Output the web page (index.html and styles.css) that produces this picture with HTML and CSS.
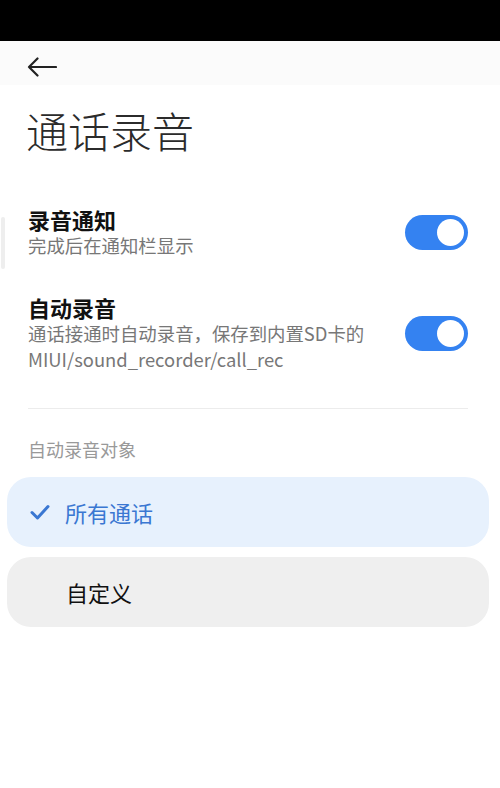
FILE: index.html
```html
<!DOCTYPE html>
<html lang="zh-CN">
<head>
<meta charset="utf-8">
<title>通话录音</title>
<link rel="stylesheet" href="styles.css">
</head>
<body>
<div class="statusbar"></div>
<header class="appbar">
  <svg class="back" width="30" height="20" viewBox="0 0 30 20" aria-label="返回">
    <path d="M29 10H2M10.5 1.5L2 10l8.5 8.5" fill="none" stroke="#222" stroke-width="2.2" stroke-linecap="round" stroke-linejoin="round"/>
  </svg>
</header>
<main class="page">
  <div class="edge"></div>
  <h1 class="title">通话录音</h1>
  <div class="row row-first">
    <div class="text">
      <div class="label">录音通知</div>
      <div class="desc">完成后在通知栏显示</div>
    </div>
    <div class="toggle"><span class="knob"></span></div>
  </div>
  <div class="row row-second">
    <div class="text">
      <div class="label">自动录音</div>
      <div class="desc">通话接通时自动录音，保存到内置SD卡的<br>MIUI/sound_recorder/call_rec</div>
    </div>
    <div class="toggle"><span class="knob"></span></div>
  </div>
  <hr class="divider">
  <div class="section">自动录音对象</div>
  <div class="option selected">
    <svg class="check" width="20" height="16" viewBox="0 0 20 16"><path d="M2 8.5l5.5 5.5L18 2.5" fill="none" stroke="#3a77d2" stroke-width="3" stroke-linecap="round" stroke-linejoin="round"/></svg>
    <span>所有通话</span>
  </div>
  <div class="option">
    <span class="spacer"></span>
    <span>自定义</span>
  </div>
</main>
</body>
</html>
```

FILE: styles.css
```css
* { box-sizing: border-box; }
html, body { margin: 0; padding: 0; background: #fff; }
body {
  width: 500px;
  min-height: 788px;
  font-family: "Noto Sans CJK SC", "Noto Sans", sans-serif;
  color: #111;
}
.statusbar { height: 41px; background: #000; }
.appbar {
  height: 44px;
  display: flex;
  align-items: center;
  padding-left: 27px;
  padding-top: 8px;
  background: #fbfbfb;
}
.back { display: block; }
.page { position: relative; padding: 0 0 40px; }
.edge {
  position: absolute;
  left: 1px;
  top: 108px;
  width: 4px;
  height: 52px;
  background: #eeeeee;
  border-radius: 2px;
}
.title {
  margin: 24px 0 0;
  padding-left: 26px;
  font-size: 42px;
  line-height: 42px;
  font-weight: 300;
  color: #2b2b2b;
}
.row {
  display: flex;
  align-items: center;
  justify-content: space-between;
  padding: 0 32px 0 28px;
}
.row-first { margin-top: 55px; }
.row-second { margin-top: 36px; }
.label {
  font-size: 22px;
  line-height: 26px;
  font-weight: 700;
  color: #111;
}
.desc {
  font-size: 18.4px;
  line-height: 26px;
  color: #777;
}
.toggle {
  width: 63px;
  height: 35px;
  border-radius: 18px;
  background: #3482f1;
  display: flex;
  align-items: center;
  justify-content: flex-end;
  padding-right: 4px;
  flex-shrink: 0;
}
.knob {
  width: 27px;
  height: 27px;
  border-radius: 50%;
  background: #fff;
}
.divider {
  border: 0;
  height: 1px;
  background: #ececec;
  margin: 36px 32px 0 28px;
}
.section {
  margin-top: 28px;
  padding-left: 28px;
  font-size: 18px;
  line-height: 24px;
  color: #999;
}
.option {
  margin: 0 11px 0 7px;
  height: 70px;
  border-radius: 24px;
  background: #efefef;
  display: flex;
  align-items: center;
  padding-left: 23px;
  font-size: 22px;
  color: #111;
}
.option.selected {
  margin-top: 16px;
  margin-bottom: 10px;
  background: #e7f1fd;
  color: #3a77d2;
}
.check { margin-right: 15px; display: block; }
.spacer { width: 36px; }
```
